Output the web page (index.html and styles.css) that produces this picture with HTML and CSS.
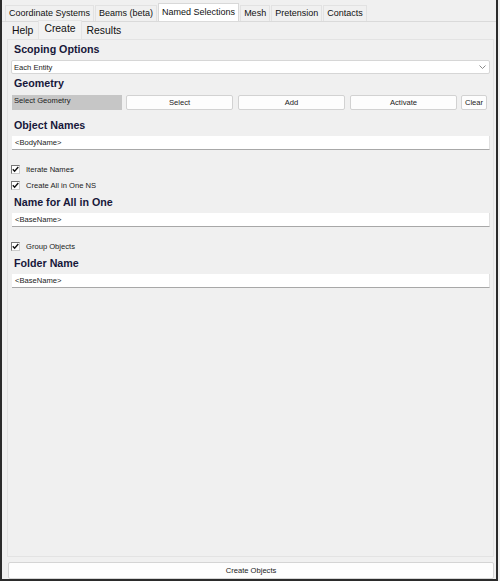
FILE: index.html
```html
<!DOCTYPE html>
<html lang="en">
  <head>
    <meta charset="UTF-8" />
    <title>Named Selections</title>
    <link rel="stylesheet" href="styles.css">
  </head>
  <body>
    <div class="window">
      <div class="main-tabs">
        <span class="tab">Coordinate Systems</span>
        <span class="tab">Beams (beta)</span>
        <span class="tab active">Named Selections</span>
        <span class="tab">Mesh</span>
        <span class="tab">Pretension</span>
        <span class="tab">Contacts</span>
      </div>

      <div class="sub-tabs">
        <span class="subtab">Help</span>
        <span class="subtab active">Create</span>
        <span class="subtab">Results</span>
      </div>

      <div class="panel">
        <div class="heading">Scoping Options</div>
        <div class="dropdown">
          <span>Each Entity</span>
          <svg width="7" height="4" viewBox="0 0 7 4" fill="none" stroke="#8a8a8a" stroke-width="1">
            <polyline points="0.5 0.5 3.5 3.5 6.5 0.5"></polyline>
          </svg>
        </div>

        <div class="heading after-drop">Geometry</div>
        <div class="geo-row">
          <div class="geo-label">Select Geometry</div>
          <button class="btn wide">Select</button>
          <button class="btn wide">Add</button>
          <button class="btn wide">Activate</button>
          <button class="btn">Clear</button>
        </div>

        <div class="heading after-row">Object Names</div>
        <div class="field">&lt;BodyName&gt;</div>

        <div class="check first">
          <span class="box">
            <svg width="7" height="7" viewBox="0 0 7 7" fill="none" stroke="#111" stroke-width="1.4">
              <polyline points="0.8 3.2 2.6 5.2 6.3 1"></polyline>
            </svg>
          </span>
          <span>Iterate Names</span>
        </div>
        <div class="check">
          <span class="box">
            <svg width="7" height="7" viewBox="0 0 7 7" fill="none" stroke="#111" stroke-width="1.4">
              <polyline points="0.8 3.2 2.6 5.2 6.3 1"></polyline>
            </svg>
          </span>
          <span>Create All in One NS</span>
        </div>

        <div class="heading after-check">Name for All in One</div>
        <div class="field">&lt;BaseName&gt;</div>

        <div class="check spaced">
          <span class="box">
            <svg width="7" height="7" viewBox="0 0 7 7" fill="none" stroke="#111" stroke-width="1.4">
              <polyline points="0.8 3.2 2.6 5.2 6.3 1"></polyline>
            </svg>
          </span>
          <span>Group Objects</span>
        </div>

        <div class="heading after-check">Folder Name</div>
        <div class="field">&lt;BaseName&gt;</div>
      </div>

      <button class="create-btn">Create Objects</button>
    </div>
  </body>
</html>
```

FILE: styles.css
```css
body {
  margin: 0;
  width: 500px;
  height: 581px;
  background: #f0f0f0;
  font-family: "Liberation Sans", Arial, sans-serif;
  color: #1a1a1a;
  overflow: hidden;
}
.window {
  box-sizing: border-box;
  width: 498px;
  height: 581px;
  border-left: 2px solid #2b2b2b;
  border-right: 2px solid #2b2b2b;
  border-bottom: 2px solid #2b2b2b;
  background: #f0f0f0;
  display: flex;
  flex-direction: column;
}
.main-tabs {
  display: flex;
  align-items: flex-end;
  height: 21px;
  padding-left: 3px;
  border-bottom: 1px solid #dadada;
}
.tab {
  font-size: 9px;
  line-height: 15px;
  padding: 0 3px;
  margin-right: 1px;
  background: #f0f0f0;
  border: 1px solid #e2e2e2;
  border-bottom: none;
  color: #111;
}
.tab.active {
  background: #ffffff;
  line-height: 17px;
  border-color: #d8d8d8;
}
.sub-tabs {
  display: flex;
  align-items: flex-end;
  height: 17px;
  padding-left: 5px;
}
.subtab {
  font-size: 10.4px;
  line-height: 14px;
  padding: 0 4px 1px;
  color: #111;
  border: 1px solid #f0f0f0;
  border-bottom: none;
}
.subtab.active {
  line-height: 16px;
  padding: 0 5px 2px;
  border-color: #e4e4e4;
  background: #f2f2f2;
}
.panel {
  flex: 1;
  margin: 0 2px 0 5px;
  padding: 1px 2px 0 3px;
  border: 1px solid #e3e3e3;
  display: flex;
  flex-direction: column;
}
.heading {
  font-size: 10.7px;
  font-weight: bold;
  line-height: 16px;
  padding-left: 3px;
  color: #17173a;
}
.heading.after-drop {
  margin-top: 1px;
}
.heading.after-row {
  margin-top: 7px;
}
.heading.after-check {
  margin-top: 1px;
}
.dropdown {
  margin-top: 3px;
  height: 14px;
  box-sizing: border-box;
  background: #fff;
  border: 1px solid #d6d6d6;
  border-radius: 2px;
  display: flex;
  align-items: center;
  justify-content: space-between;
  padding: 0 3px 0 2px;
  font-size: 7.6px;
  margin-right: 1px;
}
.geo-row {
  margin-top: 4px;
  height: 15px;
  display: flex;
  gap: 4px;
  padding-left: 1px;
  padding-right: 4px;
}
.geo-label {
  width: 110px;
  background: #c6c6c6;
  font-size: 7.6px;
  line-height: 12px;
  padding-left: 2px;
  box-sizing: border-box;
}
.btn {
  font-family: inherit;
  font-size: 7.6px;
  background: #fdfdfd;
  border: 1px solid #d2d2d2;
  border-radius: 2px;
  padding: 0 2px;
  margin: 0;
  height: 15px;
  width: 26px;
  color: #222;
}
.btn.wide {
  width: 107px;
}
.btn.wide + .btn.wide {
  margin-left: 1px;
}
.field {
  margin-top: 3px;
  margin-left: 1px;
  margin-right: 1px;
  height: 14px;
  box-sizing: border-box;
  background: #fff;
  border-bottom: 1px solid #a8a8a8;
  border-right: 1px solid #e0e0e0;
  font-size: 7.6px;
  line-height: 13px;
  padding-left: 3px;
}
.check {
  display: flex;
  align-items: center;
  height: 16px;
  font-size: 7.6px;
  gap: 6px;
}
.check.first {
  margin-top: 11px;
}
.check.spaced {
  margin-top: 11px;
}
.box {
  box-sizing: border-box;
  width: 9px;
  height: 9px;
  border: 1px solid #777;
  border-right-color: #ccc;
  border-bottom-color: #ccc;
  background: #fff;
  display: flex;
  align-items: center;
  justify-content: center;
}
.create-btn {
  font-family: inherit;
  font-size: 7.6px;
  color: #222;
  height: 17px;
  margin: 5px 2px 0 6px;
  background: #fdfdfd;
  border: 1px solid #d4d4d4;
  border-radius: 2px;
}
```
